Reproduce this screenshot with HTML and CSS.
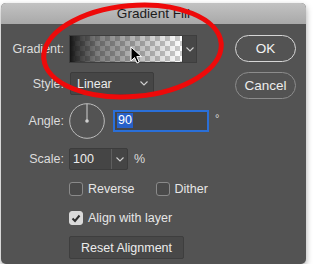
FILE: index.html
```html
<!DOCTYPE html>
<html lang="en">
<head>
    <meta charset="UTF-8">
    <meta name="viewport" content="width=device-width, initial-scale=1.0">
    <title>Gradient Fill</title>
    <link rel="stylesheet" href="styles.css">
</head>
<body>

    <div class="dialog">
        <div class="titlebar">Gradient Fill</div>
        <div class="content">
            <div class="form">
                <div class="row row-gradient">
                    <div class="label">Gradient:</div>
                    <div class="swatch">
                        <div class="swatch-fill"></div>
                        <div class="swatch-drop">
                            <svg width="8" height="5" viewBox="0 0 8 5"><path d="M0.5 0.5 L4 4 L7.5 0.5" fill="none" stroke="#cfcfcf" stroke-width="1.1"/></svg>
                        </div>
                    </div>
                </div>

                <div class="row row-style">
                    <div class="label">Style:</div>
                    <div class="select">
                        <span>Linear</span>
                        <svg width="8" height="5" viewBox="0 0 8 5"><path d="M0.5 0.5 L4 4 L7.5 0.5" fill="none" stroke="#cfcfcf" stroke-width="1.1"/></svg>
                    </div>
                </div>

                <div class="row row-angle">
                    <div class="label">Angle:</div>
                    <svg class="dial" width="36" height="36" viewBox="0 0 36 36">
                        <circle cx="18" cy="18" r="17.3" fill="none" stroke="#bdbdbd" stroke-width="1"/>
                        <line x1="18" y1="18" x2="18" y2="1" stroke="#d0d0d0" stroke-width="1"/>
                        <circle cx="18" cy="18" r="1.8" fill="#d0d0d0"/>
                    </svg>
                    <div class="input input-focus"><span class="selected">90</span></div>
                    <span class="unit unit-deg">°</span>
                </div>

                <div class="row row-scale">
                    <div class="label">Scale:</div>
                    <div class="combo">
                        <span class="combo-value">100</span>
                        <span class="combo-drop">
                            <svg width="8" height="5" viewBox="0 0 8 5"><path d="M0.5 0.5 L4 4 L7.5 0.5" fill="none" stroke="#cfcfcf" stroke-width="1.1"/></svg>
                        </span>
                    </div>
                    <span class="unit">%</span>
                </div>

                <div class="row row-checks">
                    <label class="check"><span class="box"></span>Reverse</label>
                    <label class="check check-dither"><span class="box"></span>Dither</label>
                </div>

                <div class="row row-align">
                    <label class="check"><span class="box box-on">
                        <svg width="10" height="9" viewBox="0 0 10 9"><path d="M1.5 4.5 L4 7 L8.5 1.5" fill="none" stroke="#2e2e2e" stroke-width="2"/></svg>
                    </span>Align with layer</label>
                </div>

                <div class="row row-reset">
                    <button class="flat-button">Reset Alignment</button>
                </div>
            </div>

            <div class="actions">
                <button class="pill pill-default">OK</button>
                <button class="pill">Cancel</button>
            </div>
        </div>
    </div>

    <!-- cursor and red highlight drawn over the dialog -->
    <svg class="cursor" width="14" height="19" viewBox="0 0 14 19">
        <path d="M1 1 L1 15 L4.5 11.5 L7 17 L9.2 16 L6.8 10.6 L11.5 10.6 Z" fill="#000" stroke="#fff" stroke-width="1"/>
    </svg>

    <svg class="highlight" width="314" height="278" viewBox="0 0 314 278">
        <ellipse cx="132.5" cy="51" rx="89" ry="45.5" transform="rotate(-5 132.5 51)" fill="none" stroke="#ee0a0a" stroke-width="5"/>
    </svg>

</body>
</html>
```

FILE: styles.css
```css
body {
    margin: 0;
    background-color: #ffffff;
    font-family: "Liberation Sans", Arial, sans-serif;
    font-size: 12.5px;
    color: #e6e6e6;
}

.dialog {
    width: 305px;
    height: 261px;
    margin: 3px 0 0 1px;
    background-color: #535353;
    border-radius: 5px;
    box-shadow: 0 3px 6px rgba(0, 0, 0, 0.35);
    overflow: hidden;
}

.titlebar {
    height: 21px;
    line-height: 21px;
    text-align: center;
    font-size: 13.6px;
    color: #1c1c1c;
    background: linear-gradient(#c2c2c2, #a9a9a9);
}

.content {
    display: flex;
    justify-content: space-between;
    padding: 11px 10px 0 0;
}

.form {
    display: flex;
    flex-direction: column;
}

.row {
    display: flex;
    align-items: center;
}

.label {
    width: 63px;
    padding-right: 5px;
    text-align: right;
    color: #dcdcdc;
}

/* gradient picker */
.row-gradient {
    height: 28px;
}

.swatch {
    display: flex;
    width: 128px;
    height: 28px;
    box-sizing: border-box;
    border: 1px solid #3e3e3e;
}

.swatch-fill {
    flex: 1;
    background:
        linear-gradient(to right, rgba(20, 20, 20, 1) 0%, rgba(20, 20, 20, 0.85) 6%, rgba(20, 20, 20, 0.55) 25%, rgba(20, 20, 20, 0) 100%),
        repeating-conic-gradient(#cccccc 0 25%, #ffffff 0 50%) 0 0 / 10px 10px;
}

.swatch-drop {
    width: 13px;
    display: flex;
    align-items: center;
    justify-content: center;
    background-color: #474747;
    border-left: 1px solid #3a3a3a;
}

/* style select */
.row-style {
    height: 23px;
    margin-top: 9px;
}

.select {
    display: flex;
    align-items: center;
    justify-content: space-between;
    width: 84px;
    height: 23px;
    box-sizing: border-box;
    margin-left: 1px;
    padding: 0 5px 0 6px;
    background-color: #464646;
    border: 1px solid #3c3c3c;
    border-radius: 2px;
    color: #ececec;
}

/* angle */
.row-angle {
    height: 36px;
    margin-top: 8px;
}

.dial {
    display: block;
}

.input {
    display: flex;
    align-items: center;
    width: 96px;
    height: 22px;
    box-sizing: border-box;
    margin-left: 8px;
    margin-top: -1px;
    padding-left: 2px;
    background-color: #454545;
    border: 1px solid #3c3c3c;
}

.input-focus {
    border: 2px solid #2a6fd8;
}

.selected {
    background-color: #2760c8;
    color: #ffffff;
    line-height: 15px;
    padding: 0 1px;
}

.unit {
    margin-left: 6px;
    color: #dcdcdc;
}

.unit-deg {
    align-self: flex-start;
    margin-top: 9px;
    font-size: 11px;
}

/* scale */
.row-scale {
    height: 22px;
    margin-top: 9px;
}

.combo {
    display: flex;
    width: 59px;
    height: 22px;
    box-sizing: border-box;
    background-color: #454545;
    border: 1px solid #3c3c3c;
    border-radius: 2px;
}

.combo-value {
    flex: 1;
    padding-left: 3px;
    line-height: 20px;
    color: #ececec;
}

.combo-drop {
    width: 15px;
    display: flex;
    align-items: center;
    justify-content: center;
    border-left: 1px solid #5e5e5e;
}

/* checkboxes */
.row-checks {
    height: 14px;
    margin-top: 12px;
    padding-left: 68px;
}

.row-align {
    height: 14px;
    margin-top: 15px;
    padding-left: 68px;
}

.check {
    display: flex;
    align-items: center;
    color: #e6e6e6;
}

.check-dither {
    margin-left: 21px;
}

.box {
    display: flex;
    align-items: center;
    justify-content: center;
    width: 14px;
    height: 14px;
    box-sizing: border-box;
    margin-right: 5px;
    background-color: #4a4a4a;
    border: 1px solid #8a8a8a;
    border-radius: 3px;
}

.box-on {
    background-color: #dadada;
    border-color: #dadada;
}

/* reset button */
.row-reset {
    margin-top: 11px;
    padding-left: 68px;
}

.flat-button {
    height: 23px;
    width: 115px;
    padding: 0;
    font-family: inherit;
    font-size: 12.5px;
    color: #ececec;
    background-color: #484848;
    border: 1px solid #3e3e3e;
    border-radius: 2px;
}

/* OK / Cancel */
.actions {
    display: flex;
    flex-direction: column;
    gap: 10px;
}

.pill {
    width: 61px;
    height: 27px;
    padding: 0;
    font-family: inherit;
    font-size: 13.5px;
    color: #ececec;
    background-color: #535353;
    border: 1px solid #8c8c8c;
    border-radius: 14px;
}

.pill-default {
    border-color: #d6d6d6;
    color: #f4f4f4;
}

.cursor {
    position: absolute;
    left: 130px;
    top: 46px;
}

.highlight {
    position: absolute;
    left: 0;
    top: 0;
    pointer-events: none;
}
```
